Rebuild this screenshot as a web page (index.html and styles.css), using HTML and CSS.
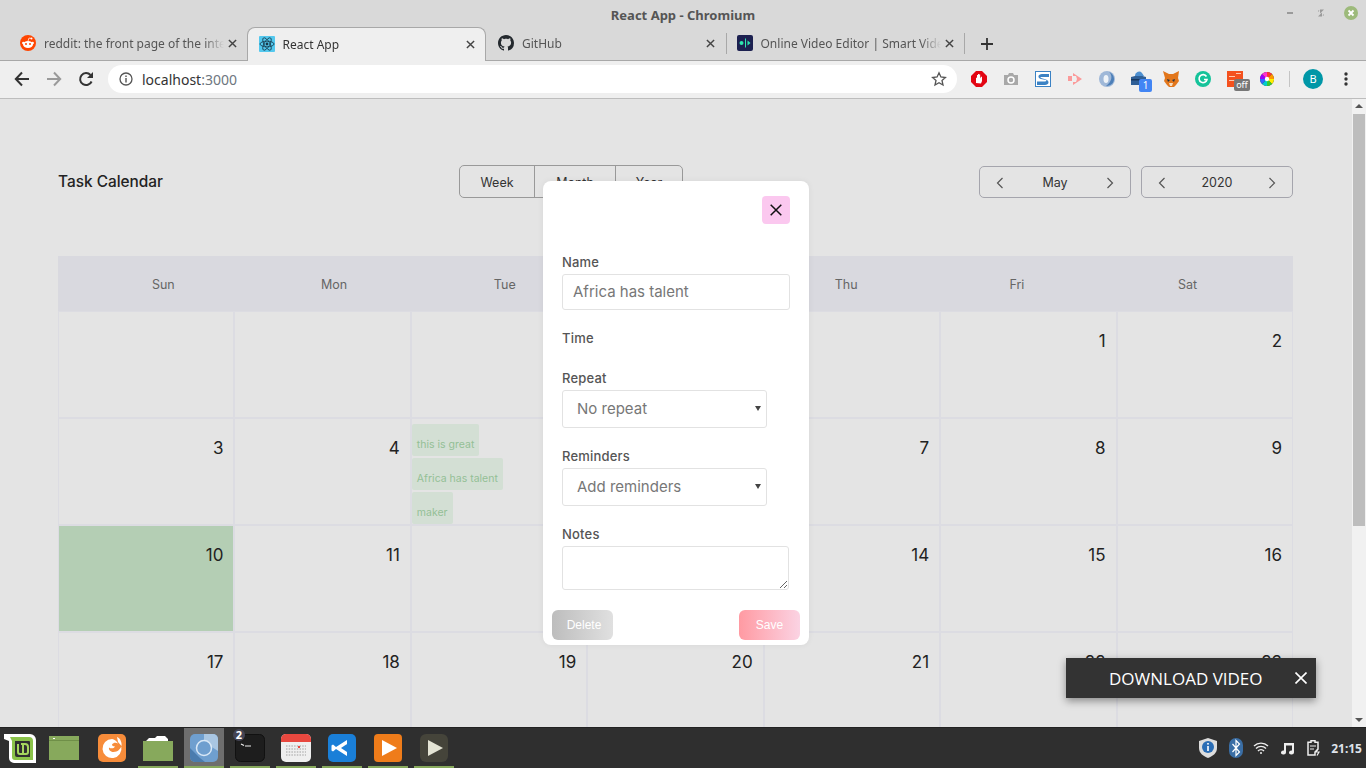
FILE: index.html
```html
<!DOCTYPE html>
<html lang="en">
<head>
<meta charset="utf-8">
<title>React App - Chromium</title>
<link rel="stylesheet" href="styles.css">
</head>
<body>
<div class="window">
  <header class="chrome">
    <div class="titlebar">
      <span class="wintitle">React App - Chromium</span>
      <div class="winctl">
        <svg class="ctl" width="30" height="14" viewBox="0 0 30 14"><rect x="11" y="6" width="6" height="2" fill="#9a9a9a"/></svg>
        <svg class="ctl" width="30" height="14" viewBox="0 0 30 14"><path d="M12 9V4.500h1.500L12 6zM18 5v4.500h-1.500L18 8zM14 3.500h4l-4 4zM16 10.500h-4l4-4z" fill="#9a9a9a"/></svg>
        <svg class="ctl" width="30" height="14" viewBox="0 0 30 14"><circle cx="15" cy="7" r="7" fill="#9dba7b"/><path d="M12.500 4.500l5 5M17.500 4.500l-5 5" stroke="#fff" stroke-width="1.800"/></svg>
      </div>
    </div>
    <div class="tabstrip">
      <div class="tab">
        <svg class="fav" viewBox="0 0 16 16"><circle cx="8" cy="8" r="8" fill="#ff4500"/><ellipse cx="8" cy="9.500" rx="5" ry="3.400" fill="#fff"/><circle cx="3.300" cy="8" r="1.200" fill="#fff"/><circle cx="12.700" cy="8" r="1.200" fill="#fff"/><circle cx="11.500" cy="3.500" r="1" fill="#fff"/><path d="M8 6l1-3 2.300.5" stroke="#fff" stroke-width=".7" fill="none"/><circle cx="6" cy="9" r="1" fill="#ff4500"/><circle cx="10" cy="9" r="1" fill="#ff4500"/></svg>
        <span class="tabtext">reddit: the front page of the internet</span>
        <svg class="tabx" viewBox="0 0 10 10"><path d="M1 1l8 8M9 1l-8 8"/></svg>
      </div>
      <div class="tab tab-active">
        <svg class="fav" viewBox="0 0 16 16"><rect width="16" height="16" rx="1" fill="#53c8ee"/><g fill="none" stroke="#17384a" stroke-width=".8"><ellipse cx="8" cy="8" rx="7" ry="2.800"/><ellipse cx="8" cy="8" rx="7" ry="2.800" transform="rotate(60 8 8)"/><ellipse cx="8" cy="8" rx="7" ry="2.800" transform="rotate(120 8 8)"/></g><circle cx="8" cy="8" r="1.400" fill="#17384a"/></svg>
        <span class="tabtext">React App</span>
        <svg class="tabx" viewBox="0 0 10 10"><path d="M1 1l8 8M9 1l-8 8"/></svg>
      </div>
      <div class="tab">
        <svg class="fav" viewBox="0 0 16 16"><path fill="#24292e" d="M8 0C3.580 0 0 3.580 0 8c0 3.540 2.290 6.530 5.470 7.590.4.070.55-.17.55-.38 0-.19-.01-.82-.01-1.490-2.010.37-2.530-.49-2.690-.94-.09-.23-.48-.94-.82-1.130-.28-.15-.68-.52-.01-.53.63-.01 1.080.58 1.230.82.72 1.210 1.870.87 2.330.66.07-.52.28-.87.51-1.070-1.780-.2-3.640-.89-3.640-3.950 0-.87.31-1.590.82-2.150-.08-.2-.36-1.020.08-2.120 0 0 .67-.21 2.200.82.64-.18 1.320-.27 2-.27.68 0 1.360.09 2 .27 1.530-1.040 2.200-.82 2.200-.82.44 1.100.16 1.920.08 2.120.51.56.82 1.270.82 2.150 0 3.070-1.870 3.750-3.650 3.950.29.25.54.73.54 1.480 0 1.070-.01 1.930-.01 2.200 0 .21.15.46.55.38A8.013 8.013 0 0016 8c0-4.420-3.580-8-8-8z"/></svg>
        <span class="tabtext">GitHub</span>
        <svg class="tabx" viewBox="0 0 10 10"><path d="M1 1l8 8M9 1l-8 8"/></svg>
      </div>
      <div class="tab tab-sep">
        <svg class="fav" viewBox="0 0 16 16"><rect width="16" height="16" rx="2" fill="#1c2050"/><circle cx="4.500" cy="8" r="2" fill="#2ee6b0"/><rect x="8" y="3.500" width="1" height="9" fill="#2ee6b0"/><path d="M10.500 5.500l3 2.500-3 2.500z" fill="#2ee6b0"/></svg>
        <span class="tabtext">Online Video Editor | Smart Video Tools</span>
        <svg class="tabx" viewBox="0 0 10 10"><path d="M1 1l8 8M9 1l-8 8"/></svg>
      </div>
      <svg class="newtab" width="12" height="12" viewBox="0 0 12 12"><path d="M6 0v12M0 6h12" stroke="#333" stroke-width="1.800"/></svg>
    </div>
    <div class="toolbar">
      <svg class="navbtn" width="16" height="16" viewBox="0 0 16 16"><path d="M15 8H2M8 1.500L1.800 8 8 14.500" fill="none" stroke="#333" stroke-width="2"/></svg>
      <svg class="navbtn" width="16" height="16" viewBox="0 0 16 16"><path d="M1 8h13M8 1.500L14.200 8 8 14.500" fill="none" stroke="#9a9a9a" stroke-width="2"/></svg>
      <svg class="navbtn" width="16" height="16" viewBox="0 0 16 16"><path d="M13.600 10.500A6 6 0 1 1 12.500 4" fill="none" stroke="#333" stroke-width="2"/><path d="M15 1v6H9z" fill="#333"/></svg>
      <div class="omnibox">
        <svg class="info" width="14" height="14" viewBox="0 0 14 14"><circle cx="7" cy="7" r="6" fill="none" stroke="#555" stroke-width="1.300"/><rect x="6.300" y="6" width="1.400" height="4.500" fill="#555"/><rect x="6.300" y="3.500" width="1.400" height="1.500" fill="#555"/></svg>
        <span class="url">localhost<span class="port">:3000</span></span>
        <svg class="star" width="16" height="16" viewBox="0 0 16 16"><path d="M8 1.800l1.900 4.200 4.500.5-3.400 3 1 4.500L8 11.700 4 14l1-4.500-3.400-3 4.500-.5z" fill="none" stroke="#555" stroke-width="1.300"/></svg>
      </div>
      <div class="exts">
        <div class="ext"><svg width="16" height="16" viewBox="0 0 16 16"><path d="M5 0h6l5 5v6l-5 5H5l-5-5V5z" fill="#e30613"/><path d="M5 12V6.500l1 .5V4l1 0v3V3h1.200v4V3.500h1V7.500l1-2 .8.500V10l-1 2.500z" fill="#fff"/></svg></div>
        <div class="ext"><svg width="16" height="16" viewBox="0 0 16 16"><path d="M1 4h4l1-2h4l1 2h4v10H1z" fill="#a8a8a8"/><circle cx="8" cy="9" r="3" fill="none" stroke="#fff" stroke-width="1.500"/></svg></div>
        <div class="ext"><svg width="16" height="16" viewBox="0 0 16 16"><rect width="16" height="16" fill="#3b82c4"/><rect x="1" y="1" width="14" height="14" fill="#fff"/><path d="M14 3H7C3 3 2 7 6 8l5 1c1 .5 0 1.500-1 1.500H2V14h8c4 0 5-4 1-5.500L6 7c-1-.3-.5-1 .5-1H14z" fill="#3b82c4"/></svg></div>
        <div class="ext"><svg width="16" height="16" viewBox="0 0 16 16"><path d="M1 5h4v5H1zM6 2l9 6-9 6V11h3l1-3-1-3H6z" fill="#fb9a9a"/></svg></div>
        <div class="ext"><svg width="16" height="16" viewBox="0 0 16 16"><circle cx="8" cy="8" r="8" fill="#9fb8d8"/><path d="M10 1c4 3 3 10-3 14 6 0 8-4 8-7s-2-6-5-7z" fill="#4d7fb8"/><ellipse cx="7" cy="8" rx="2.500" ry="4" fill="#eef3f8"/></svg></div>
        <div class="ext ext-badged"><svg width="16" height="16" viewBox="0 0 16 16"><path d="M0 6l8-2 7 2v8H0z" fill="#2f5f96"/><path d="M4 5a4 4 0 0 1 7-3l2 3z" fill="#4d8fd0"/><rect y="8" width="15" height="1.500" fill="#16365e"/></svg><span class="badge-num">1</span></div>
        <div class="ext"><svg width="16" height="16" viewBox="0 0 16 16"><path d="M0 0l6 3h4l6-3-1 7 1 3-3 4-2 2H6l-2-2-3-4 1-3z" fill="#e2761b"/><path d="M4 8l3 1-2 2zM12 8l-3 1 2 2z" fill="#233447"/><path d="M6 12h4l-1 3H7z" fill="#f6dcc0"/></svg></div>
        <div class="ext"><svg width="16" height="16" viewBox="0 0 16 16"><circle cx="8" cy="8" r="8" fill="#15c39a"/><path d="M11.500 5.500a4 4 0 1 0 .5 3H9" fill="none" stroke="#fff" stroke-width="1.600"/></svg></div>
        <div class="ext ext-badged"><svg width="16" height="16" viewBox="0 0 16 16"><rect width="16" height="16" fill="#f4511e"/><rect x="2" y="5" width="6" height="1" fill="#ffc9b0"/><rect x="9" y="2" width="5" height="1" fill="#ffc9b0"/><rect x="2" y="9" width="10" height="1" fill="#ffc9b0"/></svg><span class="badge-off">off</span></div>
        <div class="ext"><svg width="14" height="14" viewBox="0 0 14 14"><circle cx="7" cy="7" r="7" fill="#333"/><path d="M7 7V0a7 7 0 0 1 5 2z" fill="#f33"/><path d="M7 7l5-5a7 7 0 0 1 2 5z" fill="#f90"/><path d="M7 7h7a7 7 0 0 1-2 5z" fill="#fe0"/><path d="M7 7l5 5a7 7 0 0 1-5 2z" fill="#3c3"/><path d="M7 7v7a7 7 0 0 1-5-2z" fill="#0cc"/><path d="M7 7l-5 5a7 7 0 0 1-2-5z" fill="#36f"/><path d="M7 7H0a7 7 0 0 1 2-5z" fill="#90f"/><path d="M7 7L2 2a7 7 0 0 1 5-2z" fill="#f3c"/><circle cx="7" cy="7" r="2.200" fill="#fff"/></svg></div>
        <span class="extsep"></span>
        <span class="avatar">B</span>
        <svg class="dots" width="4" height="14" viewBox="0 0 4 14"><circle cx="2" cy="2" r="1.700" fill="#333"/><circle cx="2" cy="7" r="1.700" fill="#333"/><circle cx="2" cy="12" r="1.700" fill="#333"/></svg>
      </div>
    </div>
  </header>

  <div class="viewport">
    <main class="page">
      <div class="topbar">
        <h1 class="apptitle">Task Calendar</h1>
        <div class="views">
          <span class="view view-week">Week</span>
          <span class="view view-month">Month</span>
          <span class="view view-year">Year</span>
        </div>
        <div class="pickers">
          <div class="picker"><svg class="chev" viewBox="0 0 8 12"><path d="M6.500 1L1.500 6l5 5"/></svg><span class="picker-val">May</span><svg class="chev" viewBox="0 0 8 12"><path d="M1.500 1l5 5-5 5"/></svg></div>
          <div class="picker"><svg class="chev" viewBox="0 0 8 12"><path d="M6.500 1L1.500 6l5 5"/></svg><span class="picker-val">2020</span><svg class="chev" viewBox="0 0 8 12"><path d="M1.500 1l5 5-5 5"/></svg></div>
        </div>
      </div>
      <div class="weekhead">
        <span>Sun</span><span>Mon</span><span>Tue</span><span>Wed</span><span>Thu</span><span>Fri</span><span>Sat</span>
      </div>
      <div class="month">
        <div class="cell"></div><div class="cell"></div><div class="cell"></div><div class="cell"></div><div class="cell"></div>
        <div class="cell"><span class="num">1</span></div><div class="cell"><span class="num">2</span></div>
        <div class="cell"><span class="num">3</span></div><div class="cell"><span class="num">4</span></div>
        <div class="cell cell-events">
          <span class="chip">this is great</span><span class="chip">Africa has talent</span><span class="chip">maker</span>
        </div>
        <div class="cell"><span class="num">6</span></div><div class="cell"><span class="num">7</span></div><div class="cell"><span class="num">8</span></div><div class="cell"><span class="num">9</span></div>
        <div class="cell cell-today"><span class="num">10</span></div><div class="cell"><span class="num">11</span></div><div class="cell"><span class="num">12</span></div><div class="cell"><span class="num">13</span></div><div class="cell"><span class="num">14</span></div><div class="cell"><span class="num">15</span></div><div class="cell"><span class="num">16</span></div>
        <div class="cell"><span class="num">17</span></div><div class="cell"><span class="num">18</span></div><div class="cell"><span class="num">19</span></div><div class="cell"><span class="num">20</span></div><div class="cell"><span class="num">21</span></div><div class="cell"><span class="num">22</span></div><div class="cell"><span class="num">23</span></div>
      </div>

      <form class="modal">
        <div class="modal-close"><svg width="12" height="12" viewBox="0 0 12 12"><path d="M.7.700l10.600 10.600M11.300.700L.7 11.300" stroke="#111" stroke-width="1.500"/></svg></div>
        <label class="lbl lbl-name">Name</label>
        <input class="field field-name" value="Africa has talent">
        <label class="lbl lbl-time">Time</label>
        <label class="lbl lbl-repeat">Repeat</label>
        <span class="selwrap"><select class="sel"><option>No repeat</option></select></span>
        <label class="lbl lbl-rem">Reminders</label>
        <span class="selwrap"><select class="sel"><option>Add reminders</option></select></span>
        <label class="lbl lbl-rem">Notes</label>
        <textarea class="notes"></textarea>
        <div class="modal-actions">
          <span class="btn btn-del">Delete</span>
          <span class="btn btn-save">Save</span>
        </div>
      </form>

      <div class="toast">
        <span class="toast-text">DOWNLOAD VIDEO</span>
        <svg class="toast-x" width="12" height="12" viewBox="0 0 12 12"><path d="M.5.500l11 11M11.500.500l-11 11" stroke="#fff" stroke-width="1.600"/></svg>
      </div>
    </main>
    <aside class="scrollbar">
      <svg class="sb-arrow" width="14" height="14" viewBox="0 0 14 14"><path d="M3 9l4-4 4 4z" fill="#555"/></svg>
      <div class="sb-track"><div class="sb-thumb"></div></div>
      <svg class="sb-arrow" width="14" height="14" viewBox="0 0 14 14"><path d="M3 5l4 4 4-4z" fill="#555"/></svg>
    </aside>
  </div>

  <footer class="taskbar">
    <div class="launcher">
      <div class="app app-menu"><svg width="32" height="30" viewBox="0 0 32 30"><path d="M0 1h26a6 6 0 0 1 6 6v23H10a5 5 0 0 1-5-5V8L0 6z" fill="#fff"/><path d="M6 4h19a4 4 0 0 1 4 4v19H11a3 3 0 0 1-3-3V8z" fill="#8bc34a"/><path d="M11 8h14a1 1 0 0 1 1 1v15H13a2 2 0 0 1-2-2z" fill="#2f2f2f"/><path d="M14 11v8a2 2 0 0 0 2 2h6a2 2 0 0 0 2-2v-5a3 3 0 0 0-3-3h-4M19 20v-8" fill="none" stroke="#a4d65e" stroke-width="2"/></svg></div>
      <div class="app"><svg width="30" height="24" viewBox="0 0 30 24"><rect width="30" height="24" fill="#87a95c"/><rect y="4" width="30" height="1" fill="#6f8f48"/><rect x="4" y="2" width="2" height="1" fill="#fff"/></svg></div>
      <div class="app"><svg width="28" height="28" viewBox="0 0 28 28"><rect width="28" height="28" rx="5" fill="#f78c3a"/><path d="M14 5a9.500 9.500 0 1 0 9.300 7.500C22 15 20 18 15.500 18 12 18 10.500 15.500 11 13.500c2 1.500 5 1 6-1-2 0-3-1-3-2 1.500-2 4-2 6-1-1.500-2.500-3.500-4-6-4.500z" fill="#fff"/><path d="M19 3c3 1 5 5 4.500 9L20 8z" fill="#fff"/></svg></div>
      <div class="app app-on"><svg width="30" height="26" viewBox="0 0 30 26"><path d="M0 6h30v20H0z" fill="#87a95c"/><path d="M3 6l3-3h6l2-2h8l3 3v2z" fill="#fff"/></svg></div>
      <div class="app app-on app-active"><svg width="28" height="28" viewBox="0 0 28 28"><rect width="28" height="28" rx="5" fill="#6f9fcf"/><path d="M14 0h9a5 5 0 0 1 5 5v12L14 8z" fill="#a9c6e2"/><path d="M0 14L10 24l5 4H5a5 5 0 0 1-5-5z" fill="#4b7cae"/><circle cx="14" cy="14" r="7.500" fill="#6f9fcf" stroke="#d9e8f6" stroke-width="1.500"/></svg></div>
      <div class="app app-on app-term"><svg width="30" height="28" viewBox="0 0 30 28"><rect x=".5" y=".5" width="29" height="27" rx="5" fill="#1d1d1d" stroke="#111"/><path d="M6 10l3 1.500M10 12h6" stroke="#eee" stroke-width="1.200"/></svg><span class="term-badge">2</span></div>
      <div class="app app-on"><svg width="30" height="28" viewBox="0 0 30 28"><rect width="30" height="28" rx="5" fill="#efefef"/><path d="M0 8V5a5 5 0 0 1 5-5h20a5 5 0 0 1 5 5v3z" fill="#e8483f"/><path d="M5 12h20M5 15h20M5 18h20M5 21h20" stroke="#bbb" stroke-width="1.500" stroke-dasharray="1.500 1.200"/><rect x="17" y="12" width="2" height="2" fill="#e8483f"/></svg></div>
      <div class="app app-on"><svg width="28" height="28" viewBox="0 0 28 28"><rect width="28" height="28" rx="5" fill="#1a7fd8"/><path d="M19 6v16l-11-7-3 2.500-1.500-1V11.500l1.500-1 3 2.500zM19 10l-6 4 6 4z" fill="#fff" fill-rule="evenodd"/></svg></div>
      <div class="app app-on"><svg width="28" height="28" viewBox="0 0 28 28"><rect width="28" height="28" rx="4" fill="#ef7c1a"/><path d="M8 6l15 8-15 8z" fill="#fff"/></svg></div>
      <div class="app app-on"><svg width="28" height="28" viewBox="0 0 28 28"><rect width="28" height="28" rx="6" fill="#45443a"/><path d="M8 6l15 8-15 8z" fill="#e4e4d4"/></svg></div>
    </div>
    <div class="tray">
      <svg class="tray-i tray-shield" width="18" height="20" viewBox="0 0 18 20"><path d="M9 0l9 3v7c0 5-4 8-9 10-5-2-9-5-9-10V3z" fill="#ddd"/><circle cx="9" cy="9" r="6" fill="#2a6db5"/><rect x="8.200" y="8" width="1.600" height="5" fill="#fff"/><rect x="8.200" y="5" width="1.600" height="1.600" fill="#fff"/></svg>
      <svg class="tray-i tray-bt" width="14" height="20" viewBox="0 0 14 20"><rect width="14" height="20" rx="7" fill="#3a6ea5"/><path d="M3.500 6l7 8-3.500 3.500v-15L10.500 6l-7 8" fill="none" stroke="#fff" stroke-width="1.200"/></svg>
      <svg class="tray-i tray-wifi" width="16" height="12" viewBox="0 0 16 12"><path d="M1 4a10 10 0 0 1 14 0M3 6.500a7 7 0 0 1 10 0M5 9a4 4 0 0 1 6 0" fill="none" stroke="#eee" stroke-width="1.400"/><circle cx="8" cy="11" r="1" fill="#eee"/></svg>
      <svg class="tray-i tray-music" width="14" height="14" viewBox="0 0 14 14"><path d="M4 2h10v9.500a2.500 2 0 1 1-2-2V4.500H6v7a2.500 2 0 1 1-2-2z" fill="#eee"/></svg>
      <svg class="tray-i tray-batt" width="14" height="16" viewBox="0 0 14 16"><path d="M4 .7h4v1.500h3V9l-3 3v3H1V2.200h3z" fill="none" stroke="#eee" stroke-width="1.500"/><path d="M3 6h6M3 9h4M11 9l-2 3h3l-2 3.500" fill="none" stroke="#eee" stroke-width="1.200"/></svg>
      <span class="clock">21:15</span>
    </div>
  </footer>
</div>
</body>
</html>
```
FILE: styles.css
```css
* { box-sizing: border-box; }
html, body { margin: 0; height: 100%; overflow: hidden; }
body { font-family: "Noto Sans", sans-serif; }

.window { width: 1366px; height: 768px; display: flex; flex-direction: column; background: #e4e4e4; }

/* Browser chrome */
.chrome { flex: 0 0 99px; background: #d9d9d9; display: flex; flex-direction: column; }
.titlebar { height: 27px; display: flex; align-items: center; justify-content: center; position: relative; }
.wintitle { font-size: 13px; font-weight: 700; color: #555; margin-top: 3px; }
.winctl { position: absolute; right: 0; top: 6px; display: flex; }
.ctl { display: block; }

.tabstrip { height: 34px; display: flex; align-items: stretch; padding-left: 7px; border-bottom: 1px solid #a8a8a8; }
.tab { width: 239.500px; flex: none; display: flex; align-items: center; padding: 0 10px 1px 13px; font-size: 12px; color: #555; position: relative; }
.tab-active { background: #efefef; color: #333; border: 1px solid #a8a8a8; border-bottom: 0; border-radius: 8px 8px 0 0; padding-left: 11px; padding-right: 10px; height: 34px; }
.tab:nth-child(3) { padding-left: 12px; padding-right: 11px; }
.tab-sep { border-left: 1px solid #a8a8a8; border-right: 1px solid #a8a8a8; height: 21px; margin-top: 6px; padding-left: 10px; padding-right: 10px; }
.fav { width: 16px; height: 16px; flex: none; margin-right: 8px; }
.tabtext { flex: 1; min-width: 0; white-space: nowrap; overflow: hidden; -webkit-mask-image: linear-gradient(to right, #000 calc(100% - 20px), transparent 100%); mask-image: linear-gradient(to right, #000 calc(100% - 20px), transparent 100%); }
.tab-active .tabtext { color: #333; }
.tabx { width: 9px; height: 9px; flex: none; margin-left: 4px; fill: none; stroke: #444; stroke-width: 1.600; }
.newtab { align-self: center; margin-left: 16px; }

.toolbar { flex: 1; background: #efefef; display: flex; align-items: center; padding: 0 0 1px 14px; border-bottom: 1px solid #bdbdbd; }
.navbtn { flex: none; margin-right: 16px; }
.omnibox { flex: none; width: 849px; height: 28px; margin-left: -2px; background: #fff; border-radius: 14px; display: flex; align-items: center; padding: 0 10px 0 11px; }
.info { flex: none; margin-right: 9px; }
.url { flex: 1; font-size: 14px; color: #333; }
.port { color: #6e7680; }
.star { flex: none; }
.exts { display: flex; align-items: center; margin-left: 6px; }
.ext { width: 32px; height: 24px; display: flex; align-items: center; justify-content: center; position: relative; }
.badge-num { position: absolute; left: 16px; top: 12px; width: 13px; height: 13px; border-radius: 2px; background: #4285f4; color: #fff; font-size: 10px; line-height: 13px; text-align: center; }
.badge-off { position: absolute; left: 15px; top: 12px; width: 16px; height: 12px; border-radius: 2px; background: #777; color: #fff; font-size: 9px; line-height: 12px; text-align: center; }
.extsep { width: 1px; height: 16px; background: #c4c4c4; margin: 0 13px 0 6px; }
.avatar { width: 20px; height: 20px; border-radius: 50%; background: #0097a7; color: #fff; font-size: 11px; line-height: 20px; text-align: center; }
.dots { margin-left: 21px; }

/* Page */
.viewport { flex: 1; min-height: 0; display: flex; }
.page { flex: 1; min-width: 0; position: relative; overflow: hidden; padding: 66px 59px 0 58px; font-family: Inter, sans-serif; color: #222; }

.topbar { display: flex; align-items: center; justify-content: space-between; height: 33px; }
.apptitle { width: 105px; margin: 0; font-size: 15.400px; font-weight: 500; white-space: nowrap; color: #222; }
.views { display: flex; height: 33px; border: 1px solid #999; border-radius: 5px; font-size: 12.500px; color: #333; }
.view { display: flex; align-items: center; justify-content: center; padding-top: 1px; }
.view-week { width: 74px; }
.view-month { width: 82px; border-left: 1px solid #999; border-right: 1px solid #999; }
.view-year { width: 66px; }
.pickers { display: flex; gap: 10px; }
.picker { width: 152px; height: 32px; border: 1px solid #a5a5ad; border-radius: 5px; display: flex; align-items: center; justify-content: space-between; padding: 0 16px; font-size: 12.500px; color: #333; }
.picker-val { padding-top: 1px; }
.chev { width: 8px; height: 12px; fill: none; stroke: #555; stroke-width: 1.200; margin-top: 3px; }

.weekhead { margin-top: 58px; height: 56px; padding: 0 20px; background: #d9d9df; display: grid; grid-template-columns: repeat(7, 1fr); align-items: center; text-align: center; font-size: 12.500px; color: #666; }

.month { margin-top: -1px; display: grid; grid-template-columns: repeat(7, 1fr); grid-auto-rows: 107px; }
.cell { border: 1px solid #dcdce2; padding: 18px 10px 0 0; text-align: right; position: relative; }
.num { display: block; font-size: 17px; line-height: 22px; color: #222; }
.cell-today { background: #b4ceb4; }
.cell-events { display: block; padding: 5px 0 0 0; text-align: left; }
.chip { display: table; height: 32px; margin-bottom: 2px; padding: 14px 5px 0; background: #d3dfd4; color: #93c096; font-size: 10.500px; line-height: 14px; border-radius: 2px; white-space: nowrap; }

/* Modal */
.modal { position: absolute; left: 543px; top: 82px; width: 266px; height: 464px; background: #fff; border-radius: 8px; padding: 15px 19px 0; box-shadow: 0 0 6px rgba(0,0,0,.06); display: flex; flex-direction: column; align-items: flex-start; }
.modal-close { width: 28px; height: 28px; border-radius: 4px; background: #fbc8ef; display: flex; align-items: center; justify-content: center; align-self: flex-end; }
.lbl { display: block; height: 16px; line-height: 18px; font-size: 13px; letter-spacing: .2px; font-weight: 500; color: #555; margin-bottom: 5px; }
.lbl-name { margin-top: 29px; }
.lbl-time { margin-top: 19px; margin-bottom: 0; }
.lbl-repeat { margin-top: 24px; }
.lbl-rem { margin-top: 19px; }
.field { width: 228px; height: 36px; padding: 0 10px 1px; border: 1px solid #e2e2e2; border-radius: 3px; font: 15px Inter, sans-serif; color: #777; outline: 0; background: #fff; }
.selwrap { display: block; position: relative; width: 205px; height: 38px; }
.selwrap::after { content: ""; position: absolute; right: 6px; top: 16px; border-style: solid; border-width: 5px 3px 0; border-color: #444 transparent transparent; }
.sel { display: block; width: 205px; height: 38px; padding: 0 0 2px 14px; -webkit-appearance: none; appearance: none; border: 1px solid #e2e2e2; border-radius: 3px; font: 15px Inter, sans-serif; color: #777; background-color: #fff; }
.notes { display: block; width: 227px; height: 44px; border: 1px solid #e2e2e2; border-radius: 3px; background: #fff; }
.modal-actions { width: 248px; margin: 20px -10px 0; display: flex; justify-content: space-between; }
.btn { width: 61px; height: 30px; border-radius: 6px; display: flex; align-items: center; justify-content: center; font: 12px "Liberation Sans", sans-serif; color: #fff; }
.btn-del { padding-left: 3px; background: linear-gradient(to right, #bdbdbd, #e0e0e0); }
.btn-save { background: linear-gradient(to right, #ff9aa2, #fbd3e3); }

/* Toast */
.toast { position: absolute; left: 1066px; top: 559px; width: 250px; height: 40px; background: #333; box-shadow: 0 3px 8px rgba(0,0,0,.4); display: flex; align-items: center; padding-left: 43px; }
.toast-text { font: 17px "Open Sans", sans-serif; color: #fff; }
.toast-x { position: absolute; right: 9px; top: 14px; }

/* Scrollbar */
.scrollbar { flex: 0 0 14px; background: #f1f1f1; display: flex; flex-direction: column; }
.sb-arrow { flex: none; display: block; }
.sb-track { flex: 1; padding: 1px 1px 0; }
.sb-thumb { height: 412px; background: #bdbdbd; }

/* Taskbar */
.taskbar { flex: 0 0 41px; background: #2f2f2f; display: flex; justify-content: space-between; border-top: 1px solid #222; }
.launcher { display: flex; }
.app { width: 40px; margin-right: 6px; display: flex; align-items: center; justify-content: center; position: relative; border-bottom: 2px solid transparent; padding-top: 1px; }
.app:nth-child(1) { margin-right: 4px; }
.app:nth-child(2) { margin-right: 8px; }
.app-on { border-bottom-color: #87a95c; }
.app-active { background: #6e6e6e; }
.term-badge { position: absolute; left: 3px; top: 1px; width: 12px; height: 12px; border-radius: 50%; background: #445; color: #fff; font-size: 11px; font-weight: 700; line-height: 12px; text-align: center; }
.tray { display: flex; align-items: center; padding-right: 4px; }
.tray-i { display: block; flex: none; }
.tray-shield { margin-right: 12px; }
.tray-bt { margin-right: 10px; }
.tray-wifi { margin-right: 11px; }
.tray-music { margin-right: 13px; }
.tray-batt { margin-right: 10px; }
.clock { font-size: 12px; font-weight: 700; color: #dfe3ea; }
```
